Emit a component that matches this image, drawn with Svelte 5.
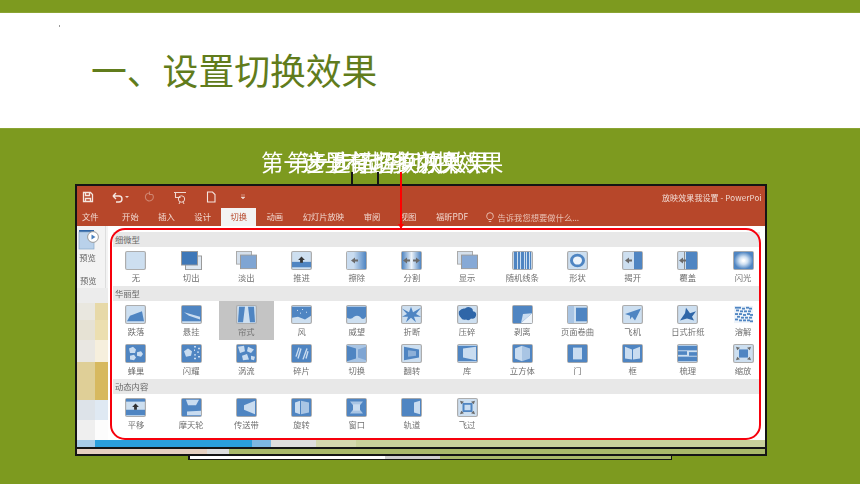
<script>
  const B = '#4f85c2', D = '#2f66a8', L = '#c9dcf0', G = '#6b6b6b', W = '#eef4fa';
  const arrowL = (x, y) => `<path d="M${x} ${y}l4-3.2v2h3v2.4h-3v2z" fill="${G}"/>`;
  const arrowR = (x, y) => `<path d="M${x} ${y}l-4-3.2v2h-3v2.4h3v2z" fill="${G}"/>`;
  const arrowUp = (x, y) => `<path d="M${x} ${y}l-3.4 4h2v3h2.8v-3h2z" fill="#333"/>`;
  const corners = `<path d="M3 3l4 1.2-2.8 2.8zM18 3l-1.2 4-2.8-2.8zM3 18l1.2-4 2.8 2.8zM18 18l-4-1.2 2.8-2.8z" fill="${G}"/>`;
  const poly = (p, f = B) => `<polygon points="${p}" fill="${f}"/>`;
  const rect = (x, y, w, h, f = B) => `<rect x="${x}" y="${y}" width="${w}" height="${h}" fill="${f}"/>`;
  const noise = () => {
    let s = rect(1, 1, 19, 19, W);
    const cells = [[2,2],[5,2],[9,3],[13,2],[16,3],[3,5],[7,6],[11,6],[15,6],[2,9],[6,9],[10,10],[14,9],[17,10],[4,12],[8,13],[12,13],[16,13],[2,15],[6,16],[10,16],[14,16],[17,17]];
    for (const [x, y] of cells) s += rect(x, y, 3, 2);
    return s;
  };
  const stack = (back, front) => `<rect x="4.5" y="5.5" width="16" height="15" fill="${back}" stroke="#9a9a9a"/><rect x="0.5" y="0.5" width="16" height="15" fill="${front}" stroke="#9a9a9a"/>`;

  const rows = [
    { title: '细微型', items: [
      ['无', ''],
      ['切出', stack('#dfe8f1', '#3f78b8'), true],
      ['淡出', `<rect x="0.5" y="0.5" width="15" height="14" fill="#d5e0ec" stroke="#aaa"/><rect x="4.5" y="4.5" width="16" height="15" fill="#7fa5d3" stroke="#9a9a9a"/>`, true],
      ['推进', rect(1, 12, 19, 6) + arrowUp(10.5, 6)],
      ['擦除', `<linearGradient id="e1"><stop offset=".35" stop-color="${L}"/><stop offset="1" stop-color="${B}"/></linearGradient><rect x="1" y="1" width="19" height="19" fill="url(#e1)"/>` + arrowL(5, 10.5)],
      ['分割', `<linearGradient id="e2"><stop offset="0" stop-color="${B}"/><stop offset=".5" stop-color="${W}"/><stop offset="1" stop-color="${B}"/></linearGradient><rect x="1" y="1" width="19" height="19" fill="url(#e2)"/>` + arrowL(2, 10.5) + arrowR(19, 10.5)],
      ['显示', `<rect x="0.5" y="0.5" width="15" height="14" fill="#d5e0ec" stroke="#aaa"/><rect x="4.5" y="4.5" width="16" height="15" fill="#86a9d6" stroke="#9a9a9a"/>`, true],
      ['随机线条', rect(2, 1, 3, 19) + rect(6, 1, 2, 19) + rect(9, 1, 3, 19) + rect(13, 1, 1, 19) + rect(15, 1, 2, 19) + rect(18, 1, 1, 19)],
      ['形状', `<circle cx="10.5" cy="10.5" r="6" fill="${W}" stroke="${B}" stroke-width="3"/>`],
      ['揭开', rect(12, 1, 8, 19) + arrowL(3, 10.5)],
      ['覆盖', rect(9, 1, 11, 19) + `<path d="M7.5 1v19" stroke="#8a8a8a"/>` + arrowL(2, 10.5)],
      ['闪光', `<radialGradient id="e3"><stop offset=".1" stop-color="#fff"/><stop offset=".45" stop-color="#cfe0f2"/><stop offset="1" stop-color="${B}"/></radialGradient><rect x="1" y="1" width="19" height="19" fill="url(#e3)"/>`],
    ]},
    { title: '华丽型', items: [
      ['跌落', poly('2,18 5,12 17,7 19,18')],
      ['悬挂', rect(1, 1, 19, 17) + poly('3,8 19,13 19,16 8,12', L)],
      ['帘式', poly('3,2 9,2 7,19 2,19') + poly('12,2 18,2 19,19 14,19')],
      ['风', poly('1,2 20,2 20,12 14,16 7,13 1,14') + `<path d="M6 6h1M11 5h1M15 8h1M9 9h1" stroke="#dce8f5"/>`],
      ['威望', `<path d="M1 2h19v11q-3 5-6 0-3-2-6 0-3 4-7 1z" fill="${B}"/>`],
      ['折断', poly('1,4 8,8 10,2 12,8 20,3 15,10 20,13 13,13 15,19 10,14 5,19 7,13 1,13 6,10')],
      ['压碎', `<path d="M2 7q3-4 6-3 2-3 6-1 2 1 2 4 4 1 3 5-1 4-5 3-2 3-5 1-4 1-5-2-3-3-2-7z" fill="${D}"/>`],
      ['剥离', rect(1, 1, 19, 19) + poly('9,20 20,9 20,20', W) + poly('9,20 20,9 11,10', L)],
      ['页面卷曲', rect(1, 1, 6, 19, '#a9c5e4') + rect(9, 3, 11, 15)],
      ['飞机', poly('3,10 19,4 13,17 10,13 8,16 8,12')],
      ['日式折纸', poly('3,17 8,9 9,3 13,9 19,7 15,13 17,17 10,15', D)],
      ['溶解', noise(), true],
    ]},
    { title: '', items: [
      ['蜂巢', rect(1, 1, 19, 19) + poly('4,5 8,3 11,6 10,10 5,10', L) + poly('12,9 16,8 18,11 16,14 12,13', L) + poly('5,13 9,12 11,15 9,18 5,17', L)],
      ['闪耀', rect(1, 1, 19, 19) + poly('3,8 7,5 11,8 10,13 5,14', L) + `<path d="M13 3h2M17 5h2M13 7h1M16 9h2M13 12h2M17 14h2M13 16h2" stroke="${L}" stroke-width="1.6"/>`],
      ['涡流', rect(1, 1, 19, 19) + poly('2,3 8,2 9,8 4,10', L) + poly('12,3 18,6 15,10 11,8', L) + poly('6,13 11,11 13,17 7,18', L) + poly('15,13 19,14 18,18 15,17', L)],
      ['碎片', rect(1, 1, 19, 19) + `<path d="M5 14l3-10M7 16l3-11M12 17l4-12M15 16l2-8" stroke="${L}" stroke-width="1.4"/>`],
      ['切换', rect(1, 1, 19, 19, '#a9c5e4') + poly('1,2 10,5 10,16 1,19') + poly('12,6 20,3 20,18 12,15', '#7fa5d3')],
      ['翻转', poly('3,3 18,6 18,15 3,18') + poly('7,7 15,8 15,13 7,14', '#8db0d8')],
      ['库', rect(1, 2, 19, 17) + poly('6,5 19,3 19,18 6,15', L)],
      ['立方体', rect(1, 1, 19, 19) + poly('3,5 10,2 10,19 3,16', L) + poly('10,2 18,5 18,16 10,19', '#a9c5e4')],
      ['门', rect(1, 1, 19, 19) + rect(6, 4, 9, 13, L)],
      ['框', rect(1, 1, 19, 19) + poly('3,3 10,6 10,17 3,16', L) + poly('18,3 11,6 11,17 18,16', L)],
      ['梳理', rect(1, 2, 19, 5) + rect(1, 8, 9, 4) + rect(12, 9, 8, 4) + rect(1, 14, 19, 5)],
      ['缩放', rect(6, 6, 9, 9) + corners],
    ]},
    { title: '动态内容', items: [
      ['平移', rect(1, 13, 19, 6) + rect(1, 1, 19, 3) + arrowUp(10.5, 6)],
      ['摩天轮', rect(1, 1, 19, 19) + poly('5,2 18,2 15,8 7,8', L) + poly('6,15 20,14 20,19 6,19', L)],
      ['传送带', rect(1, 1, 19, 19) + poly('8,8 19,3 19,18 8,13', L)],
      ['旋转', rect(1, 1, 19, 19) + poly('4,5 9,3 9,18 4,16', L) + poly('10,3 18,5 18,16 10,18', '#a9c5e4')],
      ['窗口', rect(1, 1, 19, 19) + poly('4,4 17,4 14,8 7,8', '#a9c5e4') + poly('4,17 17,17 14,13 7,13', '#a9c5e4') + rect(7, 7, 7, 7, L)],
      ['轨道', rect(1, 1, 19, 19) + poly('13,5 19,3 19,18 13,16', L)],
      ['飞过', `<rect x="6.5" y="6.5" width="8" height="8" fill="${L}" stroke="${B}" stroke-width="2"/>` + corners],
    ]},
  ];
  const tabs = ['开始', '插入', '设计', '切换', '动画', '幻灯片放映', '审阅', '视图', '福昕PDF'];
  const mosaic = [
    ['#e9e7df', '#e7d9a8', 17], ['#e6e2d4', '#ecdfb0', 20], ['#e9e7e2', '#f6efdd', 22],
    ['#dfcf97', '#d7b95f', 38], ['#dde3e9', '#dfe9f3', 20], ['#efefef', '#fcfcfc', 20],
  ];
</script>

<div class="page">
  <div class="head">
    <i class="speck"></i>
    <h1>一、设置切换效果</h1>
  </div>

  <div class="stage">
    <div class="frame">
      <div class="ribbon-top">
        <div class="qat">
          <svg class="q1" width="12" height="12" viewBox="0 0 12 12"><path d="M1.5 1.5h7l2 2v7h-9z M3.5 1.5v3h4v-3 M3.5 10.5v-3h5v3" fill="none" stroke="#f5e6e0" stroke-width="1.3"/></svg>
          <svg class="q2" width="18" height="12" viewBox="0 0 18 12"><path d="M2 5h6a3 3 0 0 1 0 6H5M2 5l3-3M2 5l3 3" fill="none" stroke="#f5e6e0" stroke-width="1.4"/><path d="M14 5h4l-2 2z" fill="#f0d8d0"/></svg>
          <svg class="q3" width="12" height="12" viewBox="0 0 12 12"><path d="M9.5 3.5a4 4 0 1 1-3-1.5M6.5 0.5v3h3" fill="none" stroke="#cf8570" stroke-width="1.1"/></svg>
          <svg class="q4" width="14" height="13" viewBox="0 0 14 13"><path d="M1 1.5h12M2.5 1.5v5h5" fill="none" stroke="#f0d8d0" stroke-width="1.1"/><circle cx="8.5" cy="8" r="3.2" fill="none" stroke="#f0d8d0"/><path d="M7 11l-1 2M10 11l1 2" stroke="#f0d8d0"/></svg>
          <svg class="q5" width="10" height="12" viewBox="0 0 10 12"><path d="M1.5 1h5l2.5 2.5V11h-7.500z" fill="none" stroke="#f5e6e0" stroke-width="1.1"/></svg>
          <svg class="q6" width="6" height="6" viewBox="0 0 6 6"><path d="M1 1h4M1 3h4l-2 2z" fill="#f0d8d0" stroke="#f0d8d0" stroke-width=".5"/></svg>
        </div>
        <div class="doc">放映效果我设置 - PowerPoi</div>
      </div>
      <div class="tabs">
        <span class="file">文件</span>
        {#each tabs as t}
          <span class:active={t === '切换'}>{t}</span>
        {/each}
        <span class="tell">
          <svg width="8" height="11" viewBox="0 0 8 11"><path d="M2.500 7.500C1 6 .7 5 .7 4a3.300 3.300 0 0 1 6.600 0c0 1-.3 2-1.800 3.500zM2.800 9.500h2.400" fill="none" stroke="#ecc8bc" stroke-width=".9"/></svg>
          告诉我您想要做什么...
        </span>
      </div>

      <div class="body">
        <aside class="left">
          <div class="tools">
            <div class="preview-tool">
              <svg width="22" height="21" viewBox="0 0 22 21"><rect x="1" y="1" width="15" height="4" fill="#2f66a8"/><rect x="1" y="3" width="15" height="17" fill="#b9d1ea" stroke="#8aa9c9" stroke-width=".7"/><circle cx="15" cy="8" r="5.400" fill="#fff" stroke="#9a9a9a"/><path d="M13.500 5.500l4 2.500-4 2.500z" fill="#4a80bd"/></svg>
              <span>预览</span>
            </div>
            <span class="group">预览</span>
          </div>
          <div class="thumbs">
            {#each mosaic as [a, b, h]}
              <div class="cell" style="height:{h}px"><i style="background:{a}"></i><i style="background:{b}"></i></div>
            {/each}
          </div>
        </aside>

        <div class="gallery">
          {#each rows as row}
            {#if row.title}<div class="sect">{row.title}</div>{/if}
            <div class="grid">
              {#each row.items as [label, art, bare]}
                <div class="tile" class:sel={label === '帘式'}>
                  <svg class="ico" width="21" height="19" viewBox="0 0 21 21" preserveAspectRatio="none">
                    {#if !bare}<rect x=".6" y=".6" width="19.800" height="19.800" rx="1.500" fill="#cddff0" stroke="#adadad" stroke-width="1.200"/>{/if}
                    {@html art}
                  </svg>
                  <span>{label}</span>
                </div>
              {/each}
            </div>
          {/each}
        </div>
      </div>

      <div class="strip">
        <i class="s1"></i><i class="s2"></i><i class="s3"></i><i class="s4"></i><i class="s5"></i>
      </div>
    </div>

    <div class="frame2"><i></i><b></b><u></u></div>
    <div class="frame3"><i></i><b></b><u></u></div>

    <div class="callout c1">第一步选择切换效果</div>
    <div class="callout c2">第一步选择切换效果</div>
    <div class="callout c3">这里有超多切换效果</div>
    <i class="wire w1"></i>
    <i class="wire w2"></i>
    <i class="wire red"></i>
    <i class="tip"></i>
    <i class="ring"></i>
  </div>
</div>

<style>
  :global(body) { margin: 0; background: #7d9a1f; }
  .page {
    width: 860px; height: 484px; overflow: hidden; background: #7d9a1f;
    font-family: "Noto Sans CJK SC", "Noto Sans", sans-serif;
    padding-top: 13px; box-sizing: border-box;
  }
  .head {
    position: relative; height: 115px; background: #fff;
    display: flex; align-items: center; padding-left: 91px; box-sizing: border-box;
    box-shadow: 0 0 1px #c6d29a;
  }
  .speck { position: absolute; left: 59px; top: 12px; width: 1px; height: 2px; background: #999; }
  h1 { margin: 0 0 2px; font-size: 35.800px; font-weight: 400; line-height: 1.2; color: #617c1c; white-space: nowrap; }

  .stage { position: relative; height: 356px; padding: 56px 0 0 75px; box-sizing: border-box; }
  .frame {
    position: relative; z-index: 2; width: 692px; height: 265px; box-sizing: border-box;
    border: 2px solid #151515; background: #f3f3f3; overflow: hidden;
    display: flex; flex-direction: column;
  }
  .frame > * { filter: blur(.3px); }
  .ribbon-top { height: 22px; background: #b7472a; display: flex; justify-content: space-between; align-items: center; flex: none; }
  .qat { display: flex; align-items: center; }
  .qat svg { display: block; flex: none; }
  .q1 { margin-left: 5px; }
  .q2 { margin-left: 17px; }
  .q3 { margin-left: 14px; }
  .q4 { margin-left: 18px; }
  .q5 { margin-left: 19px; }
  .q6 { margin-left: 24px; }
  .doc { font-size: 8px; color: #f2ddd6; white-space: nowrap; width: 103px; overflow: hidden; flex: none; letter-spacing: .1px; }
  .tabs {
    height: 18px; background: #b7472a; display: flex; align-items: center; gap: 19.500px; padding-left: 5px;
    font-size: 8.300px; color: #f1d9d1; white-space: nowrap; flex: none;
  }
  .tabs .file { margin-right: 4px; }
  .tabs span { height: 18px; line-height: 17px; }
  .tabs .active { background: #f3f3f3; color: #b7472a; padding: 0 9px; margin: 0 -9px; }
  .tell { display: flex; align-items: center; gap: 4px; margin-left: -2px; color: #e9c2b5; }

  .body { flex: 1; display: flex; min-height: 0; }
  .left { width: 31px; flex: none; display: flex; flex-direction: column; }
  .tools { height: 62px; flex: none; display: flex; flex-direction: column; align-items: flex-start; padding-left: 1px; box-sizing: border-box; color: #666; font-size: 8.300px; border-right: 1px solid #ddd; width: 29px; }
  .preview-tool { display: flex; flex-direction: column; align-items: center; margin-top: 3px; }
  .preview-tool span { line-height: 12px; margin-top: 1px; margin-left: -3px; }
  .group { line-height: 12px; margin-top: 11px; margin-left: 2px; }
  .thumbs { padding-top: 15px; background: #ececec; flex: 1; display: flex; flex-direction: column; overflow: hidden; }
  .cell { display: grid; grid-template-columns: 18px 13px; flex: none; }
  .cell i { display: block; }

  .gallery { flex: 1; min-width: 0; background: #fff; padding-top: 6px; overflow: hidden; }
  .sect { margin: 0 5px; height: 15px; background: #e8e8e8; font-size: 8.300px; line-height: 15px; color: #666; padding-left: 2px; }
  .grid { display: grid; grid-template-columns: repeat(12, 55.200px); margin-left: .4px; height: 39px; }
  .tile { display: flex; flex-direction: column; align-items: center; color: #707070; font-size: 8.300px; box-sizing: border-box; padding-top: 4px; }
  .tile.sel { background: #c4c4c4; }
  .tile .ico { display: block; flex: none; }
  .tile span { line-height: 12px; margin-top: 1px; white-space: nowrap; }

  .strip { height: 7px; flex: none; display: flex; background: #c9d19b; }
  .strip i { display: block; height: 100%; }
  .s1 { width: 18px; background: #a8cce8; }
  .s2 { width: 157px; background: #2a9fdc; }
  .s3 { width: 19px; background: #7db8e2; }
  .s4 { width: 45px; background: #dedede; }
  .s5 { width: 40px; background: #d4d8ae; }

  .frame2 {
    position: relative; z-index: 1; width: 692px; height: 8px; box-sizing: border-box; margin-top: -1px;
    border: 2px solid #151515; border-top: 0; display: flex; background: #a9b96a;
  }
  .frame2 i { width: 130px; background: #e6d0c0; }
  .frame2 b { width: 22px; background: #ddd; }
  .frame2 u { flex: 1; background: #a9b96a; }
  .frame3 {
    width: 484px; height: 4px; margin-left: 113px; box-sizing: border-box;
    border: 1px solid #151515; border-top: 0; border-left-width: 2px; display: flex; background: #a9b96a;
  }
  .frame3 i { width: 195px; background: #fff; }
  .frame3 b { width: 55px; background: #d0d0d0; }
  .frame3 u { flex: 1; background: #a9b96a; }

  .callout {
    position: absolute; z-index: 3; top: 20px; font-size: 22.400px; line-height: 1.2; color: #fff; white-space: nowrap; filter: blur(.3px);
  }
  .c1 { left: 261px; }
  .c2 { left: 287px; }
  .c3 { left: 302px; }
  .wire { position: absolute; z-index: 3; display: block; background: #151515; top: 44px; width: 2px; height: 12px; }
  .w1 { left: 351px; }
  .w2 { left: 377px; }
  .wire.red { left: 399.500px; width: 2px; height: 56px; background: #f00; }
  .tip {
    position: absolute; z-index: 4; display: block; left: 397.500px; top: 96px; width: 0; height: 0;
    border-left: 3px solid transparent; border-right: 3px solid transparent; border-top: 5px solid #f00;
  }
  .ring {
    position: absolute; z-index: 4; display: block; left: 110px; top: 100px; width: 651px; height: 212px; box-sizing: border-box;
    border: 2.500px solid #f6000c; border-radius: 15px;
  }
</style>
